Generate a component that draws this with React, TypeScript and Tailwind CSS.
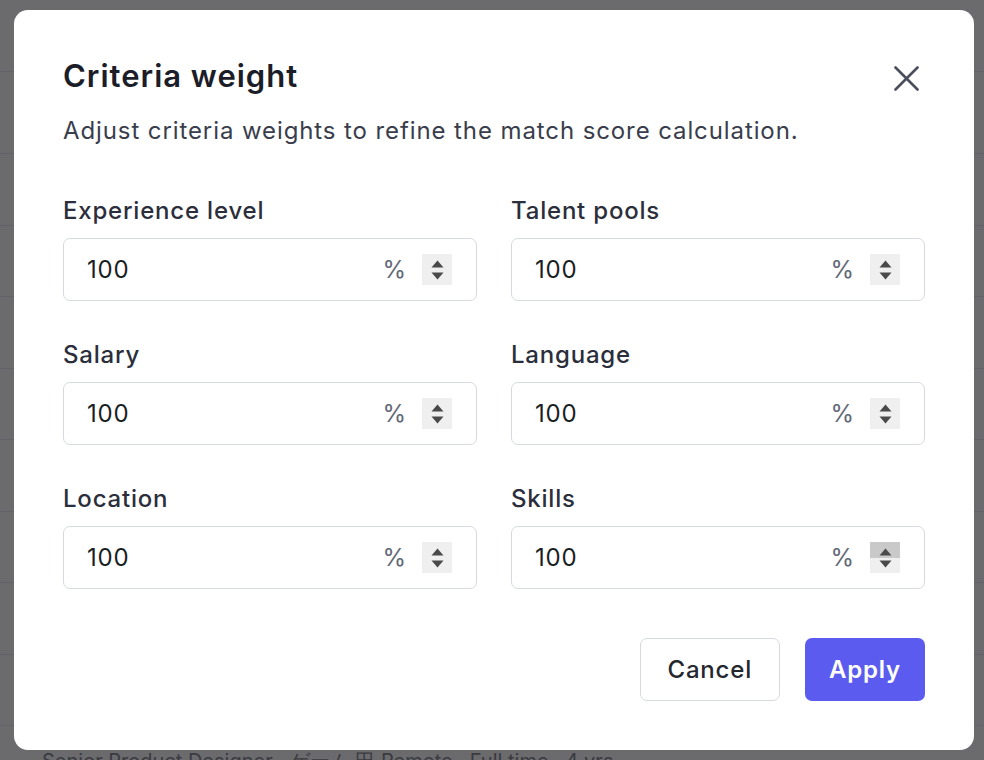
import React from 'react';

const FIELDS = [
  { label: 'Experience level', value: '100' },
  { label: 'Talent pools', value: '100' },
  { label: 'Salary', value: '100' },
  { label: 'Language', value: '100' },
  { label: 'Location', value: '100' },
  { label: 'Skills', value: '100', hover: true },
];

function Spinner({ hover }: { hover?: boolean }) {
  return (
    <div className="flex flex-col w-[30px] h-[31px]">
      <div className={`flex-1 flex items-end justify-center pb-[2px] ${hover ? 'bg-[#c9c9c9]' : 'bg-[#efefef]'}`}>
        <svg width="13" height="8" viewBox="0 0 13 8">
          <path d="M6.5 0.5 L12.5 7.5 L0.5 7.5 Z" fill="#4a4a4a" />
        </svg>
      </div>
      <div className="flex-1 flex items-start justify-center pt-[2px] bg-[#efefef]">
        <svg width="13" height="8" viewBox="0 0 13 8">
          <path d="M0.5 0.5 L12.5 0.5 L6.5 7.5 Z" fill="#4a4a4a" />
        </svg>
      </div>
    </div>
  );
}

function WeightField({ label, value, hover }: { label: string; value: string; hover?: boolean }) {
  return (
    <div className="flex flex-col gap-[12px]">
      <label className="text-[24px] leading-[30px] tracking-[0.8px] font-medium text-[#2b2e3b]">{label}</label>
      <div className="h-[63px] flex items-center border-[1.5px] border-[#d6d9de] rounded-[7px] pl-[23px] pr-[24px]">
        <span className="flex-1 text-[24px] tracking-[0.8px] text-[#1c1e26]">{value}</span>
        <span className="text-[24px] text-[#626776] mr-[16px]">%</span>
        <Spinner hover={hover} />
      </div>
    </div>
  );
}

export default function App() {
  return (
    <div
      className="relative w-[984px] h-[760px] overflow-hidden bg-[#6b6b6e]"
      style={{ fontFamily: 'Inter, "Noto Sans", sans-serif' }}
    >
      {/* page behind the overlay */}
      <div className="flex flex-col">
        <div className="h-[72px] border-b border-[#626268]" />
        <div className="h-[82px] border-b border-[#626268]" />
        {[0, 1, 2, 3, 4, 5, 6, 7].map((i) => (
          <div key={i} className="h-[71.5px] border-b border-[#626268]" />
        ))}
        <div className="pl-[42px] pt-[20px] text-[20px] leading-[30px] text-[#3a3a40] whitespace-nowrap">
          Senior Product Designer · ゲーム 田 Remote · Full time · 4 yrs
        </div>
      </div>

      {/* modal */}
      <div className="absolute left-[14px] top-[10px] w-[960px] h-[740px] bg-white rounded-[14px] px-[49px] pt-[48px] pb-[49px] flex flex-col">
        <div className="flex items-center justify-between">
          <h2 className="text-[31px] leading-[36px] tracking-[1px] font-semibold text-[#1b1d28]">Criteria weight</h2>
          <button className="w-[30px] h-[30px] flex items-center justify-center mr-[4px] mt-[4px]">
            <svg width="25" height="25" viewBox="0 0 25 25" fill="none">
              <path d="M1.5 1.5 L23.5 23.5 M23.5 1.5 L1.5 23.5" stroke="#4a4e5d" strokeWidth="2.6" strokeLinecap="round" />
            </svg>
          </button>
        </div>
        <p className="mt-[22px] text-[24px] leading-[30px] tracking-[0.9px] text-[#393d4c]">
          Adjust criteria weights to refine the match score calculation.
        </p>

        <div className="mt-[50px] grid grid-cols-2 gap-x-[34px] gap-y-[39px]">
          {FIELDS.map((f) => (
            <WeightField key={f.label} {...f} />
          ))}
        </div>

        <div className="mt-auto flex justify-end gap-[25px]">
          <button className="h-[63px] px-[27px] rounded-[7px] border-[1.5px] border-[#d6d9de] bg-white text-[24px] tracking-[0.8px] font-medium text-[#25272f]">
            Cancel
          </button>
          <button className="h-[63px] px-[24px] rounded-[7px] bg-[#5b5cef] text-[24px] tracking-[0.8px] font-semibold text-white">
            Apply
          </button>
        </div>
      </div>
    </div>
  );
}
